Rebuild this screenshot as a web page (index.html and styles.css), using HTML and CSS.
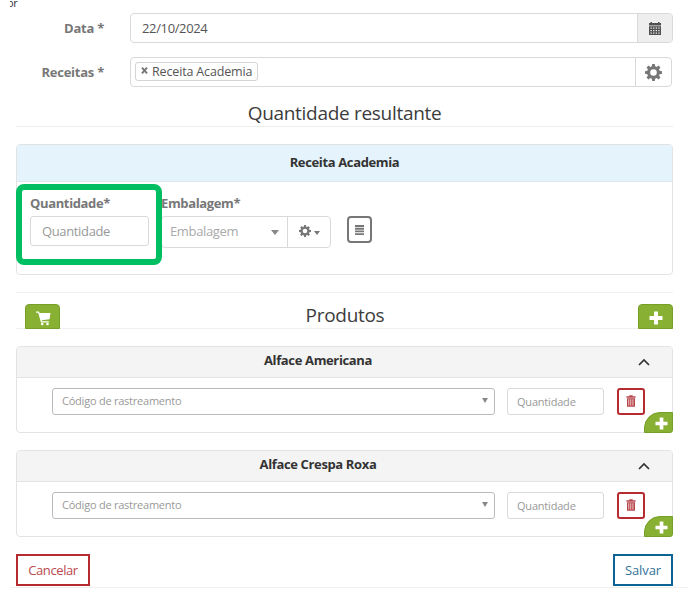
FILE: index.html
```html
<!DOCTYPE html>
<html lang="pt-BR">
<head>
<meta charset="utf-8">
<title>Produção</title>
<link rel="stylesheet" href="styles.css">
</head>
<body>
<svg class="defs" width="0" height="0" aria-hidden="true">
  <symbol id="gear" viewBox="0 0 16 16"><path fill-rule="evenodd" d="M6.8 0h2.4l.4 2.2 1.3.6L12.8 1.500l1.700 1.700-1.300 1.900.6 1.300 2.200.4v2.400l-2.200.4-.6 1.300 1.300 1.900-1.700 1.700-1.900-1.300-1.300.6-.4 2.200H6.800l-.4-2.200-1.300-.6-1.900 1.300-1.700-1.700 1.300-1.900-.6-1.300L0 9.200V6.800l2.200-.4.6-1.300L1.500 3.200l1.700-1.700 1.900 1.300 1.300-.6zM8 4.900a3.100 3.100 0 1 0 0 6.200 3.100 3.100 0 0 0 0-6.200z"/></symbol>
  <symbol id="plus" viewBox="0 0 14 14"><path d="M5 .5h4V5h4.500v4H9v4.500H5V9H.5V5H5z"/></symbol>
  <symbol id="trash" viewBox="0 0 12 14"><path fill-rule="evenodd" d="M4 0h4v1.300h3.500V3H.5V1.300H4zM1.200 3.800h9.600V14H1.200zM3 5v7.500h.8V5zm2.400 0v7.500h.8V5zm2.500 0v7.500h.8V5z"/></symbol>
  <symbol id="chevron" viewBox="0 0 12 8"><path d="M1 7l5-5 5 5" fill="none" stroke="#333" stroke-width="1.700"/></symbol>
</svg>
<main class="page">
  <div class="crumb"><span>or</span></div>

  <div class="field">
    <label>Data *</label>
    <div class="group">
      <div class="value date">22/10/2024</div>
      <div class="addon calendar"><svg width="12" height="13" viewBox="0 0 12 13"><path fill="#505050" fill-rule="evenodd" d="M1.500 0h1.500v1h6V0h1.500v1H12v2.500H0V1h1.500zM0 4.200h12V13H0zM1.500 5.500v1.300h1.300V5.500zm2.600 0v1.300h1.300V5.500zm2.600 0v1.300H8V5.500zm2.600 0v1.300h1.300V5.500zM1.500 8v1.300h1.300V8zm2.600 0v1.300h1.300V8zm2.600 0v1.300H8V8zm2.600 0v1.300h1.300V8zM1.500 10.500v1.200h1.300v-1.200zm2.600 0v1.200h1.300v-1.200zm2.600 0v1.200H8v-1.200zm2.600 0v1.200h1.300v-1.200z"/></svg></div>
    </div>
  </div>
  <div class="field second">
    <label>Receitas *</label>
    <div class="group recipes">
      <div class="value tags"><span class="tag"><svg width="7" height="7" viewBox="0 0 7 7"><path d="M1 .7l5 5.600M6 .7L1 6.300" stroke="#777" stroke-width="2"/></svg><span>Receita Academia</span></span></div>
      <div class="addon"><svg class="muted" width="17" height="17"><use href="#gear"/></svg></div>
    </div>
  </div>

  <h2 class="title result">Quantidade resultante</h2>

  <section class="panel main-panel">
    <header class="blue">Receita Academia</header>
    <div class="quantities">
      <div class="col qty"><label>Quantidade*</label><div class="input">Quantidade</div><div class="highlight"></div></div>
      <div class="col pack"><label>Embalagem*</label>
        <div class="combo"><div class="choice"><span>Embalagem</span><i class="caret"></i></div><div class="tool"><svg class="muted" width="12" height="12"><use href="#gear"/></svg><i class="caret small"></i></div></div>
      </div>
      <div class="list-button"><svg width="9" height="10" viewBox="0 0 9 10"><path d="M0 1h9M0 3.700h9M0 6.400h9M0 9.100h9" stroke="#777" stroke-width="1.900"/></svg></div>
    </div>
  </section>

  <div class="products">
    <div class="green"><svg class="cart" width="15" height="15" viewBox="0 0 15 15"><path fill="#fff" d="M0 .5h3L3.600 2H14.500L13.500 8.200 5.700 9.200 6 10.300H12.800V11.500H5L2.200 1.800H0z"/><circle cx="6.200" cy="13" r="1.300" fill="#fff"/><circle cx="11.500" cy="13" r="1.300" fill="#fff"/></svg></div>
    <h2 class="title">Produtos</h2>
    <div class="green"><svg class="white" width="14" height="14"><use href="#plus"/></svg></div>
  </div>

  <section class="panel product">
    <header><span>Alface Americana</span><svg class="chevron" width="12" height="8"><use href="#chevron"/></svg></header>
    <div class="line">
      <div class="select"><span>Código de rastreamento</span><i class="caret tiny"></i></div>
      <div class="input">Quantidade</div>
      <div class="remove"><svg width="10" height="12"><use href="#trash"/></svg></div>
    </div>
    <div class="corner"><svg class="white" width="13" height="13"><use href="#plus"/></svg></div>
  </section>

  <section class="panel product">
    <header><span>Alface Crespa Roxa</span><svg class="chevron" width="12" height="8"><use href="#chevron"/></svg></header>
    <div class="line">
      <div class="select"><span>Código de rastreamento</span><i class="caret tiny"></i></div>
      <div class="input">Quantidade</div>
      <div class="remove"><svg width="10" height="12"><use href="#trash"/></svg></div>
    </div>
    <div class="corner"><svg class="white" width="13" height="13"><use href="#plus"/></svg></div>
  </section>

  <footer><div class="btn cancel">Cancelar</div><div class="btn save">Salvar</div></footer>
</main>
</body>
</html>
```
FILE: styles.css
```css
* { box-sizing: border-box; }
body { margin: 0; background: #fff; color: #333; font: 13px/18px "Open Sans", "Noto Sans", sans-serif; letter-spacing: -0.36px; overflow: hidden; }
.defs { display: block; height: 0; }
svg { display: block; flex: none; }
.page { width: 688px; height: 600px; padding: 0 15px 0 16px; }
.crumb { width: 20px; height: 13px; margin-left: -6px; overflow: hidden; font-size: 11px; line-height: 12px; }
.crumb span { display: block; margin: -3px 0 0 -3px; }

label { font-weight: 700; color: #777; }
.field { display: flex; height: 30px; }
.field.second { margin-top: 14px; }
.field label { width: 88px; margin-right: 26px; text-align: right; line-height: 30px; letter-spacing: -0.25px; }
.group { flex: 1; display: flex; border: 1px solid #d9d9d9; border-radius: 4px; }
.group.recipes { margin-right: 1px; }
.value { flex: 1; color: #555; }
.date { padding-left: 11px; line-height: 28px; }
.addon { width: 35px; border-left: 1px solid #d9d9d9; display: flex; align-items: center; justify-content: center; padding-right: 1px; }
.recipes .addon { width: 36px; }
.calendar { background: #eee; border-radius: 0 3px 3px 0; }
.muted { fill: #777; }
.tags { display: flex; padding: 4px 0 0 4px; }
.tag { display: flex; height: 19px; padding: 0 5px; border: 1px solid #d4d4d4; border-radius: 3px; line-height: 17px; font-size: 12.500px; letter-spacing: -0.15px; }
.tag svg { margin: 4px 4px 0 0; }

.title { margin: 0; font-size: 19px; line-height: 26px; font-weight: 400; letter-spacing: -0.3px; text-align: center; color: #3c3c3c; }
.result { height: 40px; padding-top: 13px; border-bottom: 1px solid #eee; }
.panel { position: relative; border: 1px solid #e3e3e3; border-radius: 4px; }
.panel header { text-align: center; font-weight: 700; border-bottom: 1px solid #e3e3e3; border-radius: 3px 3px 0 0; background: #f4f4f4; }
.main-panel { margin-top: 17px; height: 131px; }
.panel header.blue { height: 37px; line-height: 35px; background: #e5f4fc; border-color: #dce8ee; }
.quantities { display: flex; padding: 12px 0 0 13px; }
.col { position: relative; }
.col label { display: block; height: 22px; line-height: 18px; }
.qty { width: 119px; margin-right: 12px; }
.qty .input { height: 30px; line-height: 28px; padding-left: 11px; }
.input { border: 1px solid #d9d9d9; border-radius: 3px; color: #999; }
.highlight { position: absolute; left: -14px; top: -10px; width: 146px; height: 81px; border: 6px solid #00bf63; border-radius: 8px; z-index: 2; }
.pack { width: 170px; }
.combo { display: flex; height: 32px; border: 1px solid #d9d9d9; border-radius: 4px; color: #aaa; }
.choice { width: 125px; padding: 0 8px; display: flex; align-items: center; justify-content: space-between; }
.choice span { margin-top: -2px; }
.tool { flex: 1; display: flex; align-items: center; justify-content: center; gap: 3px; border-left: 1px solid #d9d9d9; padding-bottom: 2px; }
.caret { border: solid transparent; border-width: 5px 4.500px 0; border-top-color: #888; }
.caret.small { border-width: 4px 3.500px 0; border-top-color: #777; margin-top: 4px; }
.caret.tiny { border-width: 5px 3px 0; margin-top: -2px; }
.list-button { width: 25px; height: 27px; margin: 22px 0 0 16px; border: 2px solid #777; border-radius: 4px; display: flex; align-items: center; justify-content: center; }

.products { margin-top: 17px; height: 37px; display: flex; justify-content: space-between; align-items: flex-end; border: solid #f0f0f0; border-width: 1px 0; padding-left: 9px; }
.products .title { height: 26px; position: relative; left: -4px; }
.green { width: 35px; height: 25px; margin-bottom: -1px; background: #88b033; border: 1px solid #779f28; border-radius: 4px 4px 0 0; display: flex; justify-content: center; padding: 6px 0 0 1px; }
.white { fill: #fff; }
.product { margin-top: 17px; height: 87px; }
.product header { position: relative; height: 31px; line-height: 27px; padding-right: 53px; }
.chevron { position: absolute; right: 22px; top: 11px; }
.line { display: flex; padding: 10px 27px 0 35px; font-size: 11px; letter-spacing: -0.23px; }
.select { width: 443px; height: 27px; margin-right: 12px; padding: 0 6px 0 9px; border: 1px solid #bbb; border-radius: 3px; color: #999; display: flex; align-items: center; justify-content: space-between; }
.select span { margin-top: -1px; }
.line .input { width: 97px; height: 27px; line-height: 26px; padding-left: 9px; margin-right: 13px; letter-spacing: -0.2px; }
.remove { width: 28px; height: 27px; border: 2px solid #b52b30; border-radius: 3px; fill: #b9484d; display: flex; align-items: center; justify-content: center; padding-bottom: 2px; }
.corner { position: absolute; right: -1px; bottom: -1px; width: 29px; height: 21px; background: #88b033; border: 1px solid #779f28; border-radius: 16px 0 3px 0; padding: 4px 0 0 10px; }

footer { display: flex; justify-content: space-between; align-items: flex-start; height: 34px; margin: 17px -15px 0 -6px; padding: 0 15px 0 6px; border-bottom: 1px solid #f0f0f0; }
.btn { height: 32px; border: 2px solid #b52b30; color: #b9484d; line-height: 29px; text-align: center; width: 74px; letter-spacing: -0.4px; }
.save { width: 60px; border-color: #0c6396; color: #34729b; letter-spacing: -0.1px; }
```
